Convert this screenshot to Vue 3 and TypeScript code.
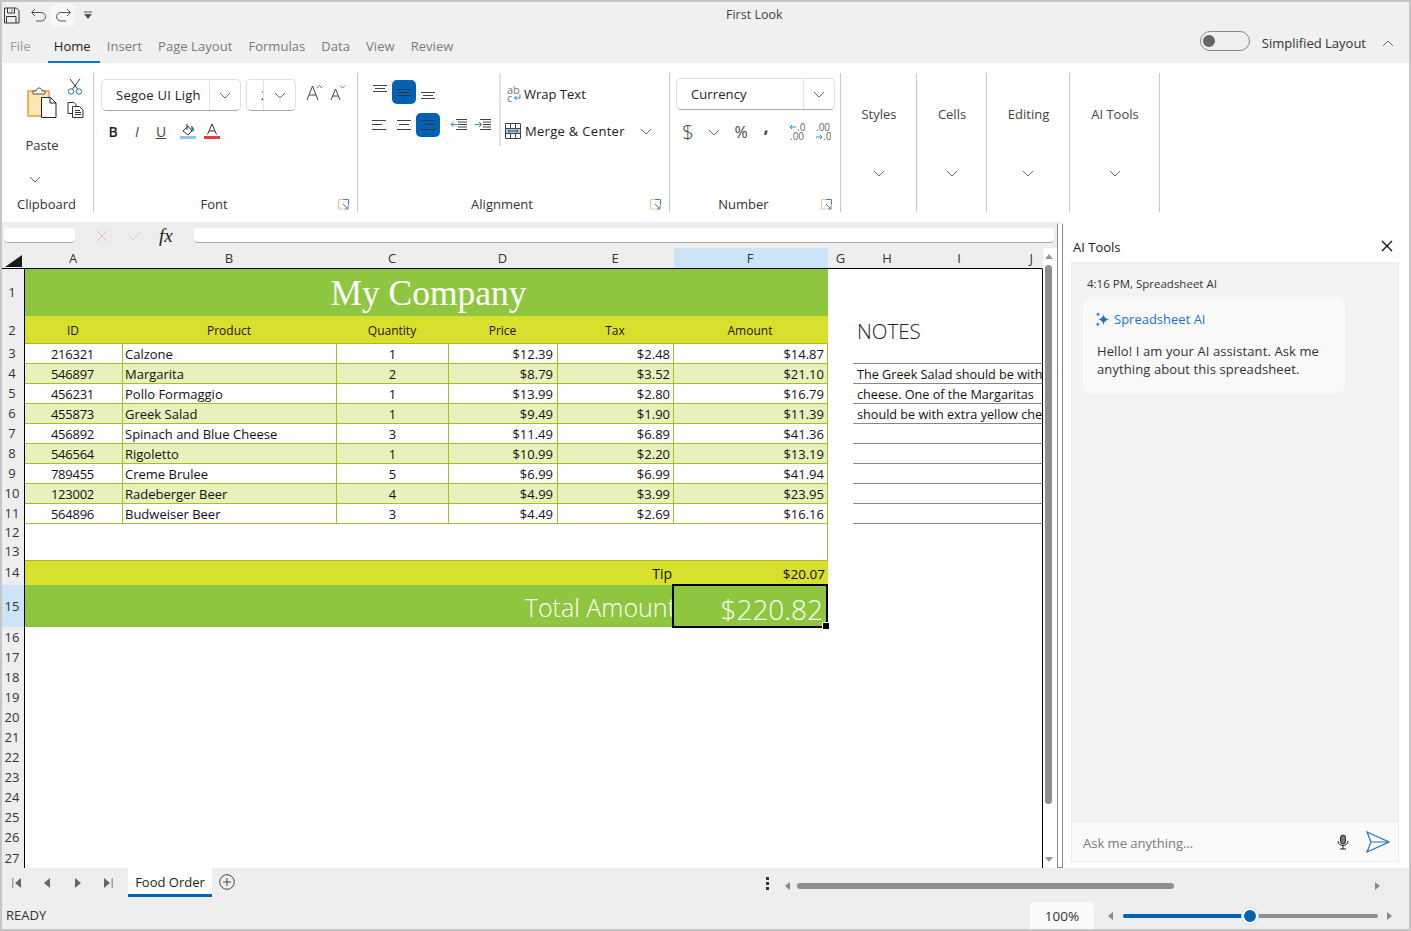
<template>
  <div class="window">
    <header class="titlebar">
      <div class="qat">
        <svg class="qat-save" viewBox="0 0 17 17"><path d="M1.500 1h12l2.500 2.500V16h-14.500zM4.500 1v5h7V1M3.500 16v-6.500h9.500V16M9 2.500v2" /></svg>
        <svg class="qat-arrow" viewBox="0 0 17 15"><path d="M5 1L1.500 4.500 5 8M2 4.500h9c3 0 4.500 2 4.500 4.300S13.500 13 11 13H6" /></svg>
        <span class="qat-hover">
          <svg class="qat-arrow" viewBox="0 0 17 15"><path d="M12 1l3.500 3.500L12 8M15 4.500H6c-3 0-4.500 2-4.500 4.300S3.500 13 6 13h5" /></svg>
        </span>
        <svg class="qat-drop" viewBox="0 0 10 10"><path d="M1 1.500h8V2.500H1zM1 4h8L5 9z" /></svg>
      </div>
      <span class="title">First Look</span>
    </header>

    <nav class="tabs">
      <span v-for="tab in ribbonTabs" :key="tab" class="tab" :class="{ active: tab === 'Home', file: tab === 'File' }">{{ tab }}</span>
      <div class="simplified">
        <span class="toggle"><i /></span>
        <span>Simplified Layout</span>
        <svg class="chev up" viewBox="0 0 12 7"><path d="M1 6l5-5 5 5" /></svg>
      </div>
    </nav>

    <section class="ribbon">
      <div class="group clipboard">
        <div class="clip-body">
          <div class="paste">
            <svg width="30" height="33" viewBox="0 0 30 33">
              <path d="M1 6h21v25H1z" fill="#fde6b0" stroke="#f09a30" stroke-width="1.500" />
              <path d="M6 9h12v-3h-3c0-4-6-4-6 0H6z" fill="#fff" stroke="#555" />
              <path d="M14.500 12.500h9l5.500 5.500v14.500H14.500z" fill="#fff" stroke="#222" />
              <path d="M23 12.500V18h6" fill="none" stroke="#222" />
            </svg>
            <span class="paste-label">Paste</span>
            <svg class="chev paste-chev" viewBox="0 0 12 7"><path d="M1 1l5 5 5-5" /></svg>
          </div>
          <div class="clip-tools">
            <svg width="16" height="17" viewBox="0 0 16 17" fill="none">
              <path d="M3 1l7.500 10M13 1L5.500 11" stroke="#333" />
              <circle cx="4" cy="13.500" r="2.700" stroke="#1a78c2" />
              <circle cx="12" cy="13.500" r="2.700" stroke="#1a78c2" />
            </svg>
            <svg width="17" height="16" viewBox="0 0 17 16" fill="none" stroke="#333">
              <path d="M1 .5h6l2 2v2M1 .5v11h4" />
              <path d="M5.500 4.500h7l3.500 3.500v7.500H5.500zM8 8.500h5M8 10.500h6M8 12.500h6" fill="#fff" />
            </svg>
          </div>
        </div>
        <div class="group-label plain"><span>Clipboard</span></div>
      </div>

      <div class="group font">
        <div class="font-body">
          <div class="row">
            <div class="combo font-name"><span class="combo-text">Segoe UI Ligh</span><span class="combo-btn"><svg class="chev" viewBox="0 0 12 7"><path d="M1 1l5 5 5-5" /></svg></span></div>
            <div class="combo font-size"><span class="combo-text">2</span><span class="combo-btn"><svg class="chev" viewBox="0 0 12 7"><path d="M1 1l5 5 5-5" /></svg></span></div>
            <svg class="grow" width="17" height="17" viewBox="0 0 17 17" fill="none"><path d="M1 16L6.500 2 12 16M3 11h7" stroke="#444" /><path d="M11 4l2.500-2.500L16 4" stroke="#2b88d8" /></svg>
            <svg class="shrink" width="16" height="17" viewBox="0 0 16 17" fill="none"><path d="M1 16l4.500-11L10 16M2.700 12h5.600" stroke="#444" /><path d="M10 1.500l2.500 2.500L15 1.500" stroke="#2b88d8" /></svg>
          </div>
          <div class="row format-row">
            <span class="fmt bold">B</span>
            <span class="fmt italic">I</span>
            <span class="fmt under">U</span>
            <span class="fmt shifted">
              <svg width="16" height="16" viewBox="0 0 16 16" fill="none"><path d="M3 8l5-5 4 5-4 4z" stroke="#333" /><path d="M7 1v6" stroke="#333" /><path d="M11 3c3 1 3 3 2.500 6-1.500-1-2-2-2.500-6z" fill="#1f6fb5" /><path d="M0 13h16v3H0z" fill="#92c5ea" /></svg>
            </span>
            <span class="fmt shifted">
              <svg width="16" height="16" viewBox="0 0 16 16" fill="none"><path d="M3.500 11.500L8 1l4.500 10.500M5 8h6" stroke="#333" /><path d="M0 13h16v3H0z" fill="#ee3a3a" /></svg>
            </span>
          </div>
        </div>
        <div class="group-label">
          <span>Font</span>
          <svg class="launcher" viewBox="0 0 11 11" fill="none"><path d="M5 .5H1a.500.500 0 0 0-.500.500v9h5" stroke="#f0c48c" /><path d="M5 .5h5.500V6M5 5l5 5M6.500 10H10V6.500" stroke="#5b7b98" /></svg>
        </div>
      </div>

      <div class="group align">
        <div class="align-body">
          <div class="align-grid">
            <div class="row">
              <span class="ic"><svg width="16" height="16" viewBox="0 0 16 16"><path d="M1 1.500h14M3 4.500h10M1 7.500h14" /></svg></span>
              <span class="ic on"><svg width="16" height="16" viewBox="0 0 16 16"><path d="M1 5.500h14M3 8.500h10M1 11.500h14" /></svg></span>
              <span class="ic"><svg width="16" height="16" viewBox="0 0 16 16"><path d="M1 8.500h14M3 11.500h10M1 14.500h14" /></svg></span>
            </div>
            <div class="row">
              <span class="ic"><svg width="16" height="16" viewBox="0 0 16 16"><path d="M0 3.500h14M0 7.500h10M0 12.500h14" /></svg></span>
              <span class="ic"><svg width="16" height="16" viewBox="0 0 16 16"><path d="M1 3.500h14M3 7.500h10M1 12.500h14" /></svg></span>
              <span class="ic on"><svg width="16" height="16" viewBox="0 0 16 16"><path d="M1 3.500h14M5 7.500h10M1 12.500h14" /></svg></span>
              <span class="ic indent"><svg width="16" height="16" viewBox="0 0 16 16"><path d="M5 2.500h11M7 5h9M7 7.500h9M7 10h9M5 12.500h11" /><path class="arrow" d="M6 7.500H0M2.500 5L0 7.500 2.500 10" /></svg></span>
              <span class="ic"><svg width="16" height="16" viewBox="0 0 16 16"><path d="M5 2.500h11M8 5h8M8 7.500h8M8 10h8M5 12.500h11" /><path class="arrow" d="M0 7.500h6.500M4 5l2.500 2.500L4 10" /></svg></span>
            </div>
          </div>
          <div class="wrap-col">
            <div class="wrap-item wrap-text">
              <svg width="14" height="18" viewBox="0 0 14 18"><text x="0" y="8.500" class="mini big">ab</text><text x="0" y="17" class="mini big">c</text><path d="M13 9.500v3.500H7.500M9.500 11l-2 2 2 2" fill="none" stroke="#2b88d8" /></svg>
              <span>Wrap Text</span>
            </div>
            <div class="wrap-item merge">
              <svg width="16" height="16" viewBox="0 0 16 16" fill="none"><path d="M.5 5.500h15v5H.5z" fill="#9dc9ec" /><path d="M.5 .5h15v15H.5zM.5 5.500h15M.5 10.500h15M5.500 .5v5M10.500 .5v5M5.500 10.500v5M10.500 10.500v5" stroke="#444" /><path d="M3 8h10M4.500 6.800L3 8l1.500 1.200M11.500 6.800L13 8l-1.500 1.200" stroke="#333" stroke-width=".8" /></svg>
              <span>Merge &amp; Center</span>
              <svg class="chev merge-chev" viewBox="0 0 12 7"><path d="M1 1l5 5 5-5" /></svg>
            </div>
          </div>
        </div>
        <div class="group-label">
          <span>Alignment</span>
          <svg class="launcher" viewBox="0 0 11 11" fill="none"><path d="M5 .5H1a.500.500 0 0 0-.500.500v9h5" stroke="#f0c48c" /><path d="M5 .5h5.500V6M5 5l5 5M6.500 10H10V6.500" stroke="#5b7b98" /></svg>
        </div>
      </div>

      <div class="group number">
        <div class="number-body">
          <div class="combo currency"><span class="combo-text">Currency</span><span class="combo-btn"><svg class="chev" viewBox="0 0 12 7"><path d="M1 1l5 5 5-5" /></svg></span></div>
          <div class="row num-row">
            <span class="num dollar">$</span>
            <span class="num chev-cell"><svg class="chev" viewBox="0 0 12 7"><path d="M1 1l5 5 5-5" /></svg></span>
            <span class="num percent">%</span>
            <span class="num comma">,</span>
            <svg class="dec first" width="16" height="18" viewBox="0 0 16 18"><text x="8" y="8" class="mini">.0</text><text x="1" y="17" class="mini">.00</text><path d="M7 4H1M3 2L1 4l2 2" fill="none" stroke="#2b88d8" /></svg>
            <svg class="dec" width="16" height="18" viewBox="0 0 16 18"><text x="1" y="8" class="mini">.00</text><text x="8" y="17" class="mini">.0</text><path d="M1 14h6M5 12l2 2-2 2" fill="none" stroke="#2b88d8" /></svg>
          </div>
        </div>
        <div class="group-label">
          <span>Number</span>
          <svg class="launcher" viewBox="0 0 11 11" fill="none"><path d="M5 .5H1a.500.500 0 0 0-.500.500v9h5" stroke="#f0c48c" /><path d="M5 .5h5.500V6M5 5l5 5M6.500 10H10V6.500" stroke="#5b7b98" /></svg>
        </div>
      </div>

      <div v-for="item in collapsedGroups" :key="item.name" class="group collapsed" :style="{ width: item.width + 'px' }">
        <span>{{ item.name }}</span>
        <svg class="chev" viewBox="0 0 12 7"><path d="M1 1l5 5 5-5" /></svg>
      </div>
    </section>

    <div class="workspace">
      <div class="left">
        <div class="formula">
          <span class="name-box" />
          <div class="formula-tools">
            <svg width="12" height="12" viewBox="0 0 12 12" fill="none" stroke="#f2b5b5"><path d="M1 1l10 10M11 1L1 11" /></svg>
            <svg width="13" height="12" viewBox="0 0 13 12" fill="none" stroke="#c6d8bc"><path d="M1 6l4 4 7-8" /></svg>
            <span class="fx">fx</span>
          </div>
          <span class="formula-input" />
        </div>
        <div class="sheet-wrap">
          <div class="grid">
            <div class="corner"><svg width="17" height="12" viewBox="0 0 17 12"><path d="M17 0v12H0z" fill="#1a1a1a" /></svg></div>
            <div v-for="col in columns" :key="col" class="col-head" :class="{ sel: col === 'F', last: col === 'J' }">{{ col }}</div>

            <div class="row-head">1</div>
            <div class="title-cell">My Company</div>
            <div class="blank" />

            <div class="row-head centered">2</div>
            <div v-for="h in headings" :key="h" class="heading">{{ h }}</div>
            <div class="gap" />
            <div class="notes-title">NOTES</div>

            <template v-for="(order, i) in orders" :key="order.id">
              <div class="row-head">{{ i + 3 }}</div>
              <div class="cell center id" :class="{ alt: i % 2 === 1 }">{{ order.id }}</div>
              <div class="cell" :class="{ alt: i % 2 === 1 }">{{ order.product }}</div>
              <div class="cell center" :class="{ alt: i % 2 === 1 }">{{ order.qty }}</div>
              <div class="cell money price" :class="{ alt: i % 2 === 1 }">{{ order.price }}</div>
              <div class="cell money" :class="{ alt: i % 2 === 1 }">{{ order.tax }}</div>
              <div class="cell money" :class="{ alt: i % 2 === 1 }">{{ order.amount }}</div>
              <div class="gap" />
              <div class="note"><span>{{ notes[i] }}</span></div>
            </template>

            <div class="row-head">12</div>
            <div class="spacer" />
            <div class="blank" />
            <div class="row-head">13</div>
            <div class="spacer end" />
            <div class="blank" />

            <div class="row-head">14</div>
            <div class="tip-label">Tip</div>
            <div class="tip-value">$20.07</div>
            <div class="blank" />

            <div class="row-head sel centered">15</div>
            <div class="total-label"><span>Total Amount</span></div>
            <div class="total-value">$220.82<i class="handle" /></div>
            <div class="blank" />

            <template v-for="n in emptyRows" :key="n">
              <div class="row-head centered">{{ n }}</div>
              <div class="blank full" />
            </template>
          </div>
          <div class="vscroll">
            <svg class="tri" viewBox="0 0 8 5"><path d="M4 0l4 5H0z" /></svg>
            <span class="vthumb" />
            <svg class="tri" viewBox="0 0 8 5"><path d="M0 0h8L4 5z" /></svg>
          </div>
        </div>
      </div>
      <div class="splitter" />
      <aside class="panel">
        <div class="panel-head">
          <span class="panel-title">AI Tools</span>
          <svg width="12" height="12" viewBox="0 0 12 12" fill="none" stroke="#111" stroke-width="1.300"><path d="M1 1l10 10M11 1L1 11" /></svg>
        </div>
        <div class="chat">
          <div class="stamp">4:16 PM, Spreadsheet AI</div>
          <div class="bubble">
            <div class="bubble-title">
              <svg width="15" height="15" viewBox="0 0 15 15" fill="#1a73c9"><path d="M8.500 2c.4 3 1.700 4.600 6 5.500-4.300.9-5.600 2.500-6 6-.4-3.500-1.700-5.100-5.500-6 3.800-.9 5.100-2.500 5.500-5.500zM3 0c.3 1.400.9 2 2.200 2.300C3.900 2.600 3.300 3.200 3 4.600c-.3-1.400-.9-2-2.200-2.300C2.100 2 2.700 1.400 3 0zM2.800 10c.3 1.400.9 2 2.200 2.300-1.300.3-1.900.9-2.200 2.500-.3-1.600-.9-2.200-2.300-2.500 1.400-.3 2-.9 2.300-2.300z" /></svg>
              <span>Spreadsheet AI</span>
            </div>
            <p>Hello! I am your AI assistant. Ask me anything about this spreadsheet.</p>
          </div>
        </div>
        <div class="ask">
          <span class="ask-text">Ask me anything...</span>
          <svg class="mic" width="12" height="16" viewBox="0 0 12 16" fill="none" stroke="#222"><rect x="3.500" y="1" width="5" height="9" rx="2.500" fill="#777" /><path d="M1 7c0 6 10 6 10 0M6 12v3M3 15h6" /></svg>
          <svg width="24" height="22" viewBox="0 0 24 22" fill="none" stroke="#1f77c4" stroke-width="1.200"><path d="M1 1l22 10L1 21l4-10zM5 11h18" /></svg>
        </div>
      </aside>
    </div>

    <div class="tabbar">
      <div class="sheet-nav">
        <svg class="nav" viewBox="0 0 11 10"><path class="bar" d="M0 0h1.500v10H0z" /><path d="M9 0v10L3 5z" /></svg>
        <svg class="nav" viewBox="0 0 11 10"><path d="M8 0v10L2 5z" /></svg>
        <svg class="nav" viewBox="0 0 11 10"><path d="M3 0v10l6-5z" /></svg>
        <svg class="nav" viewBox="0 0 11 10"><path class="bar" d="M9.500 0H11v10H9.500z" /><path d="M2 0v10l6-5z" /></svg>
      </div>
      <span class="sheet-tab">Food Order</span>
      <svg class="add" width="16" height="16" viewBox="0 0 16 16" fill="none" stroke="#444"><circle cx="8" cy="8" r="7.300" /><path d="M8 4v8M4 8h8" /></svg>
      <span class="dots"><i /><i /><i /></span>
      <svg class="tri-h scroll-left" viewBox="0 0 5 8"><path d="M5 0v8L0 4z" /></svg>
      <div class="hscroll"><span /></div>
      <svg class="tri-h scroll-right" viewBox="0 0 5 8"><path d="M0 0v8l5-4z" /></svg>
    </div>

    <footer class="status">
      <span class="ready">READY</span>
      <span class="zoom-box">100%</span>
      <svg class="tri-h zoom-out" viewBox="0 0 5 8"><path d="M5 0v8L0 4z" /></svg>
      <div class="slider"><span class="fill" /><span class="knob" /></div>
      <svg class="tri-h zoom-in" viewBox="0 0 5 8"><path d="M0 0v8l5-4z" /></svg>
    </footer>
  </div>
</template>

<script setup lang="ts">
interface Order {
  id: string;
  product: string;
  qty: number;
  price: string;
  tax: string;
  amount: string;
}

const ribbonTabs = ['File', 'Home', 'Insert', 'Page Layout', 'Formulas', 'Data', 'View', 'Review'];

const collapsedGroups = [
  { name: 'Styles', width: 76 },
  { name: 'Cells', width: 70 },
  { name: 'Editing', width: 83 },
  { name: 'AI Tools', width: 90 },
];

const columns = ['A', 'B', 'C', 'D', 'E', 'F', 'G', 'H', 'I', 'J'];
const headings = ['ID', 'Product', 'Quantity', 'Price', 'Tax', 'Amount'];

const orders: Order[] = [
  { id: '216321', product: 'Calzone', qty: 1, price: '$12.39', tax: '$2.48', amount: '$14.87' },
  { id: '546897', product: 'Margarita', qty: 2, price: '$8.79', tax: '$3.52', amount: '$21.10' },
  { id: '456231', product: 'Pollo Formaggio', qty: 1, price: '$13.99', tax: '$2.80', amount: '$16.79' },
  { id: '455873', product: 'Greek Salad', qty: 1, price: '$9.49', tax: '$1.90', amount: '$11.39' },
  { id: '456892', product: 'Spinach and Blue Cheese', qty: 3, price: '$11.49', tax: '$6.89', amount: '$41.36' },
  { id: '546564', product: 'Rigoletto', qty: 1, price: '$10.99', tax: '$2.20', amount: '$13.19' },
  { id: '789455', product: 'Creme Brulee', qty: 5, price: '$6.99', tax: '$6.99', amount: '$41.94' },
  { id: '123002', product: 'Radeberger Beer', qty: 4, price: '$4.99', tax: '$3.99', amount: '$23.95' },
  { id: '564896', product: 'Budweiser Beer', qty: 3, price: '$4.49', tax: '$2.69', amount: '$16.16' },
];

const notes = [
  '',
  'The Greek Salad should be with',
  'cheese. One of the Margaritas',
  'should be with extra yellow chee',
  '',
  '',
  '',
  '',
  '',
];

const emptyRows = Array.from({ length: 12 }, (_, i) => i + 16);
</script>

<style>
html,
body {
  margin: 0;
  background: #fff;
}
</style>

<style scoped>
.window {
  width: 1411px;
  height: 931px;
  box-sizing: border-box;
  border: 2px solid #c6c6c6;
  background: #f0f0f0;
  display: flex;
  flex-direction: column;
  overflow: hidden;
  font-family: "Open Sans", "Noto Sans", sans-serif;
  font-size: 13px;
  color: #333;
}

svg {
  display: block;
  flex: none;
}

.row {
  display: flex;
  align-items: center;
}

.chev {
  width: 12px;
  height: 7px;
  fill: none;
  stroke: #5b6b7b;
}

.titlebar {
  height: 26px;
  display: flex;
  align-items: center;
  flex: none;
}

.qat {
  width: 93px;
  height: 26px;
  display: flex;
  align-items: center;
  padding-left: 1px;
  box-sizing: border-box;
}

.qat-save {
  width: 17px;
  height: 17px;
  fill: none;
  stroke: #333;
}

.qat-arrow {
  width: 17px;
  height: 15px;
  fill: none;
  stroke: #555;
  margin-left: 10px;
}

.qat-hover {
  width: 24px;
  height: 23px;
  margin-left: 4px;
  border-radius: 4px;
  background: #f8f8f8;
  display: flex;
  align-items: center;
  justify-content: center;
}

.qat-hover .qat-arrow {
  margin-left: 0;
}

.qat-drop {
  width: 10px;
  height: 10px;
  margin-left: 8px;
  fill: #555;
}

.title {
  margin-left: 631px;
  margin-top: -2px;
  font-size: 12.500px;
  color: #444;
}

.tabs {
  height: 35px;
  padding-left: 2px;
  display: flex;
  align-items: stretch;
  flex: none;
}

.tab {
  padding: 4px 6px 0;
  margin-right: 4px;
  line-height: 29px;
  color: #7a7a7a;
  letter-spacing: .05px;
  border-bottom: 2px solid transparent;
}

.tab.active {
  color: #222;
  padding-right: 9px;
  margin-right: 1px;
  border-bottom-color: #0078d4;
}

.tab.file {
  color: #9a9a9a;
  margin-right: 11px;
}

.simplified {
  margin-left: auto;
  margin-right: 15px;
  height: 30px;
  display: flex;
  align-items: center;
  color: #333;
}

.toggle {
  width: 50px;
  height: 20px;
  box-sizing: border-box;
  border: 1px solid #888;
  border-radius: 10px;
  margin-right: 12px;
  margin-top: -4px;
  display: flex;
  align-items: center;
  padding-left: 2px;
}

.toggle i {
  width: 12px;
  height: 12px;
  border-radius: 50%;
  background: #666;
}

.chev.up {
  margin-left: 16px;
}

.ribbon {
  height: 159px;
  flex: none;
  box-sizing: border-box;
  padding: 10px 0;
  background: #fff;
  display: flex;
}

.group {
  box-sizing: border-box;
  border-right: 1px solid #c8c8c8;
  display: flex;
  flex-direction: column;
  justify-content: space-between;
  flex: none;
}

.group-label {
  height: 16px;
  line-height: 16px;
  display: flex;
  align-items: center;
}

.group-label span {
  flex: 1;
  text-align: center;
  padding-right: 4px;
}

.group-label.plain span {
  padding-right: 2px;
}

.launcher {
  width: 11px;
  height: 11px;
  margin-right: 8px;
}

.clipboard {
  width: 92px;
}

.clip-body {
  display: flex;
}

.paste {
  padding: 12px 0 0 20px;
  width: 40px;
  display: flex;
  flex-direction: column;
  align-items: center;
}

.paste-label {
  margin-top: 18px;
  line-height: 18px;
}

.paste-chev {
  margin-top: 22px;
  margin-left: -14px;
}

.clip-tools {
  margin-left: 5px;
  padding-top: 5px;
  display: flex;
  flex-direction: column;
  gap: 7px;
}

.font {
  width: 264px;
}

.font-body {
  padding: 6px 0 0 7px;
}

.combo {
  height: 32px;
  box-sizing: border-box;
  border: 1px solid #e0e0e0;
  border-bottom-color: #a8a8a8;
  border-radius: 5px;
  display: flex;
  align-items: center;
  overflow: hidden;
  flex: none;
  color: #222;
}

.combo-text {
  flex: 1;
  padding-left: 14px;
  white-space: nowrap;
  overflow: hidden;
  letter-spacing: .1px;
}

.font-name .combo-text {
  letter-spacing: .25px;
}

.combo-btn {
  height: 100%;
  box-sizing: border-box;
  border-left: 1px solid #e4e4e4;
  display: flex;
  align-items: center;
  justify-content: center;
  flex: none;
}

.font-name {
  width: 140px;
}

.font-name .combo-btn {
  width: 31px;
}

.font-size {
  width: 50px;
  margin-left: 5px;
}

.font-size .combo-btn {
  width: 32px;
}

.grow {
  margin-left: 10px;
  margin-top: -5px;
}

.shrink {
  margin-left: 7px;
  margin-top: -5px;
}

.format-row {
  margin-top: 10px;
  height: 20px;
}

.fmt {
  width: 24px;
  display: flex;
  justify-content: center;
  color: #222;
  font-size: 14px;
}

.fmt.shifted {
  padding-left: 6px;
  box-sizing: border-box;
}

.bold {
  font-weight: 600;
}

.italic {
  font-style: italic;
  color: #444;
}

.under {
  text-decoration: underline;
  color: #444;
}

.align {
  width: 312px;
}

.align-body {
  display: flex;
}

.align-grid {
  width: 143px;
  height: 73px;
  box-sizing: border-box;
  padding: 7px 0 0 10px;
  display: flex;
  flex-direction: column;
  gap: 9px;
  border-right: 2px solid #e2e2e2;
}

.ic {
  width: 24px;
  height: 24px;
  border-radius: 5px;
  display: flex;
  align-items: center;
  justify-content: center;
  flex: none;
}

.ic path {
  fill: none;
  stroke: #444;
}

.ic path.arrow {
  stroke: #2b88d8;
}

.ic.on {
  background: #0061b5;
}

.ic.on path {
  stroke: #333;
}

.ic.indent {
  margin-left: 7px;
}

.wrap-col {
  padding: 11px 0 0 5px;
  display: flex;
  flex-direction: column;
  gap: 17px;
}

.wrap-item {
  height: 20px;
  display: flex;
  align-items: center;
  gap: 4px;
  color: #222;
}

.wrap-text {
  gap: 3px;
}

.wrap-text svg {
  margin-left: 1px;
}

.merge svg:first-child {
  margin-left: -1px;
}

.merge span {
  letter-spacing: .3px;
}

.merge-chev {
  margin-left: 11px;
}

.mini {
  font-size: 10px;
  fill: #666;
  font-family: "Open Sans", sans-serif;
}

.mini.big {
  font-size: 11px;
  fill: #777;
}

.number {
  width: 171px;
}

.number-body {
  padding: 5px 0 0 6px;
}

.currency {
  width: 159px;
}

.currency .combo-btn {
  width: 31px;
}

.num-row {
  margin-top: 12px;
  height: 20px;
}

.num {
  display: flex;
  justify-content: center;
  color: #444;
  flex: none;
}

.dollar {
  width: 24px;
  font-size: 21px;
  font-weight: 300;
}

.chev-cell {
  width: 28px;
}

.percent {
  width: 26px;
  font-size: 16px;
}

.comma {
  width: 24px;
  font-weight: 700;
  font-size: 18px;
  margin-top: -12px;
}

.dec {
  margin-left: 10px;
}

.dec.first {
  margin-left: 11px;
}

.collapsed {
  align-items: center;
  justify-content: flex-start;
  padding: 32px 0 0 1px;
  color: #444;
}

.collapsed span {
  line-height: 18px;
}

.collapsed .chev {
  margin-top: 47px;
  margin-left: -1px;
}

.workspace {
  height: 646px;
  flex: none;
  display: flex;
}

.left {
  width: 1055px;
  display: flex;
  flex-direction: column;
  flex: none;
}

.formula {
  height: 26px;
  flex: none;
  background: #eee;
  box-sizing: border-box;
  padding: 6px 3px 0 2px;
  display: flex;
  align-items: flex-start;
}

.name-box,
.formula-input {
  height: 15px;
  box-sizing: border-box;
  background: #fff;
  border-radius: 4px;
  border-bottom: 1px solid #aaa;
}

.name-box {
  width: 71px;
}

.formula-tools {
  width: 98px;
  height: 16px;
  margin-left: 10px;
  background: #ededed;
  display: flex;
  align-items: center;
  flex: none;
}

.formula-tools svg:first-child {
  margin-left: 11px;
}

.formula-tools svg:nth-child(2) {
  margin-left: 20px;
}

.fx {
  margin-left: 18px;
  font-family: "Liberation Serif", serif;
  font-style: italic;
  font-size: 19px;
  color: #222;
}

.formula-input {
  margin-left: 11px;
  flex: 1;
}

.sheet-wrap {
  flex: 1;
  display: flex;
  background: #fff;
}

.grid {
  width: 1041px;
  flex: none;
  display: grid;
  grid-template-columns: 23px 98px 214px 112px 109px 116px 154px 25px 68px 76px 46px;
  grid-template-rows: 21px 47px 28px repeat(9, 20px) 18px 19px 24px 42px repeat(11, 20px) 21px;
  font-size: 13px;
  color: #111;
  overflow: hidden;
}

.corner,
.col-head {
  background: #eee;
  border-bottom: 1px solid #000;
  box-sizing: border-box;
}

.corner {
  display: flex;
  align-items: flex-end;
  padding: 0 0 1px 3px;
}

.col-head {
  text-align: center;
  line-height: 20px;
  padding-right: 2px;
  color: #333;
}

.col-head:nth-child(n+8) {
  padding-right: 0;
}

.col-head.sel {
  background: #cce4f7;
}

.col-head.last {
  text-align: right;
  padding-right: 9px;
  border-right: 1px solid #eee;
}

.row-head {
  background: #eee;
  border-right: 1px solid #000;
  box-sizing: border-box;
  padding: 0 2px 2px 0;
  text-align: center;
  color: #333;
  display: flex;
  align-items: center;
  justify-content: center;
}

.row-head.centered {
  padding-bottom: 0;
}

.row-head.sel {
  background: #cce4f7;
}

.title-cell {
  grid-column: span 6;
  box-sizing: border-box;
  padding-left: 4px;
  background: #8fc640;
  color: #fff;
  font-family: "Liberation Serif", serif;
  font-size: 35.500px;
  text-align: center;
  line-height: 48px;
}

.blank {
  grid-column: span 4;
  box-sizing: border-box;
  border-right: 1px solid #000;
}

.blank.full {
  grid-column: span 10;
}

.heading {
  background: #d6e02d;
  border-bottom: 1px solid #a9bd25;
  box-sizing: border-box;
  padding: 1px 2px 0 0;
  display: flex;
  align-items: center;
  justify-content: center;
  color: #2a1208;
  font-size: 12px;
}

.gap {
  background: #fff;
}

.notes-title {
  grid-column: span 3;
  box-sizing: border-box;
  border-right: 1px solid #000;
  padding: 2px 0 0 4px;
  font-size: 20.500px;
  font-weight: 300;
  line-height: 26px;
  color: #222;
}

.cell {
  box-sizing: border-box;
  border-right: 1px solid #a9bd25;
  border-bottom: 1px solid #a9bd25;
  padding: 0 3px 0 2px;
  display: flex;
  align-items: center;
  white-space: nowrap;
}

.cell.center {
  justify-content: center;
  padding: 0;
}

.cell.id {
  padding-right: 2px;
  letter-spacing: -.25px;
}

.cell.money {
  justify-content: flex-end;
}

.cell.price {
  padding-right: 4px;
}

.cell.alt {
  background: #e8f0bb;
}

.note {
  grid-column: span 3;
  box-sizing: border-box;
  border-right: 1px solid #000;
  border-bottom: 1px solid #888;
  padding-left: 4px;
  overflow: hidden;
  white-space: nowrap;
  font-size: 12.650px;
  display: flex;
  align-items: center;
}

.spacer {
  grid-column: span 6;
  box-sizing: border-box;
  border-right: 1px solid #a9bd25;
}

.spacer.end {
  border-bottom: 1px solid #a9bd25;
}

.tip-label {
  grid-column: span 5;
  background: #d6e02d;
  display: flex;
  align-items: flex-end;
  justify-content: flex-end;
  padding-right: 2px;
  font-size: 14px;
  line-height: 22px;
}

.tip-value {
  background: #d6e02d;
  display: flex;
  align-items: flex-end;
  justify-content: flex-end;
  padding-right: 3px;
  font-size: 13.500px;
  line-height: 22px;
}

.total-label {
  grid-column: span 5;
  background: #8fc640;
  color: #fff;
  display: flex;
  align-items: center;
  justify-content: flex-end;
  padding-top: 2px;
  font-size: 25px;
  font-weight: 300;
  white-space: nowrap;
}

.total-label span {
  margin-right: -2px;
}

.total-value {
  position: relative;
  z-index: 1;
  box-sizing: border-box;
  background: #8fc640;
  border: 2px solid #000;
  margin: -1px 0 -1px -2px;
  color: #fff;
  font-size: 28px;
  font-weight: 300;
  text-align: right;
  line-height: 47px;
  padding-right: 3px;
}

.handle {
  position: absolute;
  right: -4px;
  bottom: -4px;
  width: 6px;
  height: 6px;
  background: #000;
  border: 1px solid #fff;
}

.vscroll {
  width: 14px;
  flex: none;
  display: flex;
  flex-direction: column;
  align-items: center;
  box-sizing: border-box;
  padding: 6px 3px 6px 0;
}

.tri {
  width: 8px;
  height: 5px;
  fill: #999;
}

.vthumb {
  width: 7px;
  height: 539px;
  margin: 6px 0 auto;
  border-radius: 4px;
  background: #8f8f8f;
}

.splitter {
  width: 6px;
  flex: none;
  box-sizing: border-box;
  margin-top: 2px;
  background: #fff;
  border: 1px solid #888;
  border-top: 0;
}

.panel {
  flex: 1;
  background: #fff;
  display: flex;
  flex-direction: column;
  padding: 0 10px 6px 8px;
  box-sizing: border-box;
}

.panel-head {
  height: 40px;
  flex: none;
  box-sizing: border-box;
  padding: 8px 6px 0 2px;
  display: flex;
  align-items: center;
  justify-content: space-between;
  color: #222;
}

.panel-title {
  padding-top: 2px;
}

.chat {
  flex: 1;
  background: #f3f3f3;
  border: 1px solid #eee;
  padding: 13px 53px 0 11px;
}

.stamp {
  padding-left: 4px;
  font-size: 11.500px;
  line-height: 16px;
  color: #333;
}

.bubble {
  margin-top: 5px;
  height: 97px;
  box-sizing: border-box;
  border-radius: 10px;
  background: #f9f9f9;
  padding: 13px 12px 0 12px;
  color: #333;
}

.bubble-title {
  display: flex;
  align-items: center;
  gap: 4px;
  color: #1a73c9;
}

.bubble p {
  margin: 14px 0 0 2px;
  line-height: 18px;
  letter-spacing: .1px;
}

.ask {
  height: 40px;
  flex: none;
  background: #fafafa;
  border: 1px solid #eee;
  border-top: 0;
  box-sizing: border-box;
  display: flex;
  align-items: center;
  padding: 0 8px 0 11px;
}

.ask-text {
  flex: 1;
  padding-top: 2px;
  color: #7b7b7b;
}

.mic {
  margin-right: 17px;
}

.tabbar {
  height: 29px;
  flex: none;
  background: #eee;
  display: flex;
  align-items: center;
}

.sheet-nav {
  width: 126px;
  flex: none;
  padding-left: 10px;
  box-sizing: border-box;
  display: flex;
  gap: 19px;
}

.nav {
  width: 11px;
  height: 10px;
  fill: #666;
}

.nav .bar {
  fill: #8aa8c4;
}

.sheet-tab {
  width: 84px;
  height: 29px;
  box-sizing: border-box;
  background: #fff;
  border-bottom: 3px solid #0061b5;
  text-align: center;
  line-height: 28px;
  flex: none;
  color: #222;
}

.add {
  margin-left: 7px;
  margin-top: -2px;
}

.dots {
  margin-left: 530px;
  margin-top: 2px;
  width: 4px;
  display: flex;
  flex-direction: column;
  gap: 2px;
  align-items: center;
  flex: none;
}

.dots i {
  width: 3px;
  height: 3px;
  background: #333;
}

.tri-h {
  width: 5px;
  height: 8px;
  fill: #888;
}

.scroll-left {
  margin: 7px 0 0 16px;
}

.hscroll {
  width: 572px;
  margin: 7px 0 0 7px;
  flex: none;
}

.hscroll span {
  display: block;
  width: 377px;
  height: 6px;
  border-radius: 3px;
  background: #8f8f8f;
}

.scroll-right {
  margin: 7px 0 0 6px;
}

.status {
  flex: 1;
  background: #eee;
  display: flex;
  align-items: center;
}

.ready {
  margin-left: 4px;
  padding-top: 4px;
  color: #333;
}

.zoom-box {
  margin-left: auto;
  align-self: flex-end;
  width: 64px;
  height: 27px;
  background: #fafafa;
  border-radius: 4px 4px 0 0;
  text-align: center;
  line-height: 28px;
  font-size: 13.500px;
}

.zoom-out {
  margin: 6px 0 0 14px;
}

.slider {
  width: 255px;
  height: 4px;
  margin: 6px 9px 0 10px;
  border-radius: 2px;
  background: #8f8f8f;
  position: relative;
}

.fill {
  display: block;
  width: 127px;
  height: 4px;
  border-radius: 2px;
  background: #0061b5;
}

.knob {
  position: absolute;
  left: 119px;
  top: -6px;
  width: 12px;
  height: 12px;
  border-radius: 50%;
  background: #0061b5;
  border: 2px solid #fff;
  box-shadow: 0 0 0 1px #c5dcf0;
  box-sizing: content-box;
}

.zoom-in {
  margin: 6px 17px 0 0;
}
</style>
